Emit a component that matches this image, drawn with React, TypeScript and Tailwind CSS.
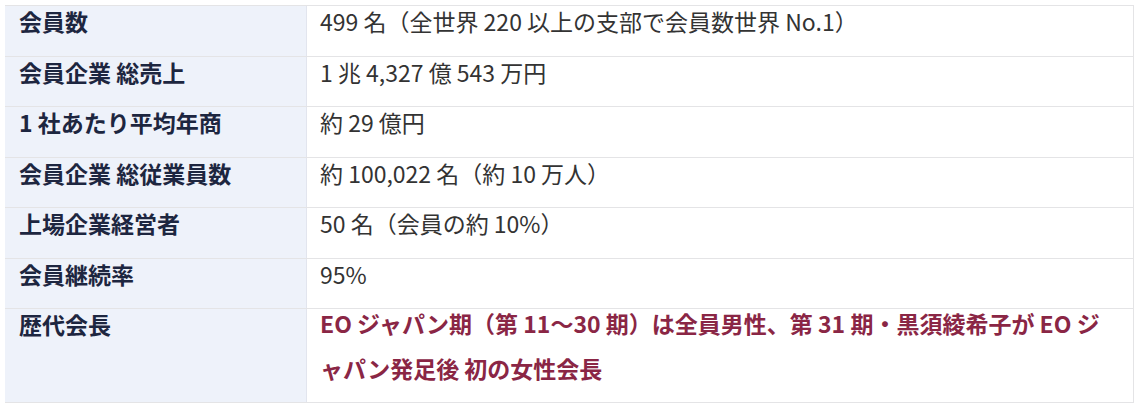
const rows: { label: string; value: string }[] = [
  { label: '会員数', value: '499 名（全世界 220 以上の支部で会員数世界 No.1）' },
  { label: '会員企業 総売上', value: '1 兆 4,327 億 543 万円' },
  { label: '1 社あたり平均年商', value: '約 29 億円' },
  { label: '会員企業 総従業員数', value: '約 100,022 名（約 10 万人）' },
  { label: '上場企業経営者', value: '50 名（会員の約 10%）' },
  { label: '会員継続率', value: '95%' },
];

const font = { fontFamily: '"Noto Sans CJK JP", "Noto Sans", sans-serif' };

function Row({ label, children, last }: { label: string; children: React.ReactNode; last?: boolean }) {
  return (
    <div
      className={`flex border-b border-[#e4e4e6] ${last ? 'h-[94px]' : 'h-[50.5px]'}`}
    >
      <div className="w-[302px] shrink-0 bg-[#eef2fa] border-r border-[#e2e5ee] pl-[14px] text-[23px] leading-[30px] font-bold text-[#1d2640]">
        {label}
      </div>
      <div className="flex-1 bg-white pl-[13px] text-[23px] leading-[30px] text-[#333333]">
        {children}
      </div>
    </div>
  );
}

export default function App() {
  return (
    <div className="w-[1142px] h-[416px] bg-white p-[5px] pr-[8px]" style={font}>
      <div className="border-t border-r border-[#e4e4e6]">
        {rows.map((r) => (
          <Row key={r.label} label={r.label}>
            {r.value}
          </Row>
        ))}
        <Row label="歴代会長" last>
          <div className="-mt-[8px] font-bold text-[#8a2645] leading-[45px] whitespace-nowrap">
            EO ジャパン期（第 11〜30 期）は全員男性、第 31 期・黒須綾希子が EO ジ
            <br />
            ャパン発足後 初の女性会長
          </div>
        </Row>
      </div>
    </div>
  );
}
